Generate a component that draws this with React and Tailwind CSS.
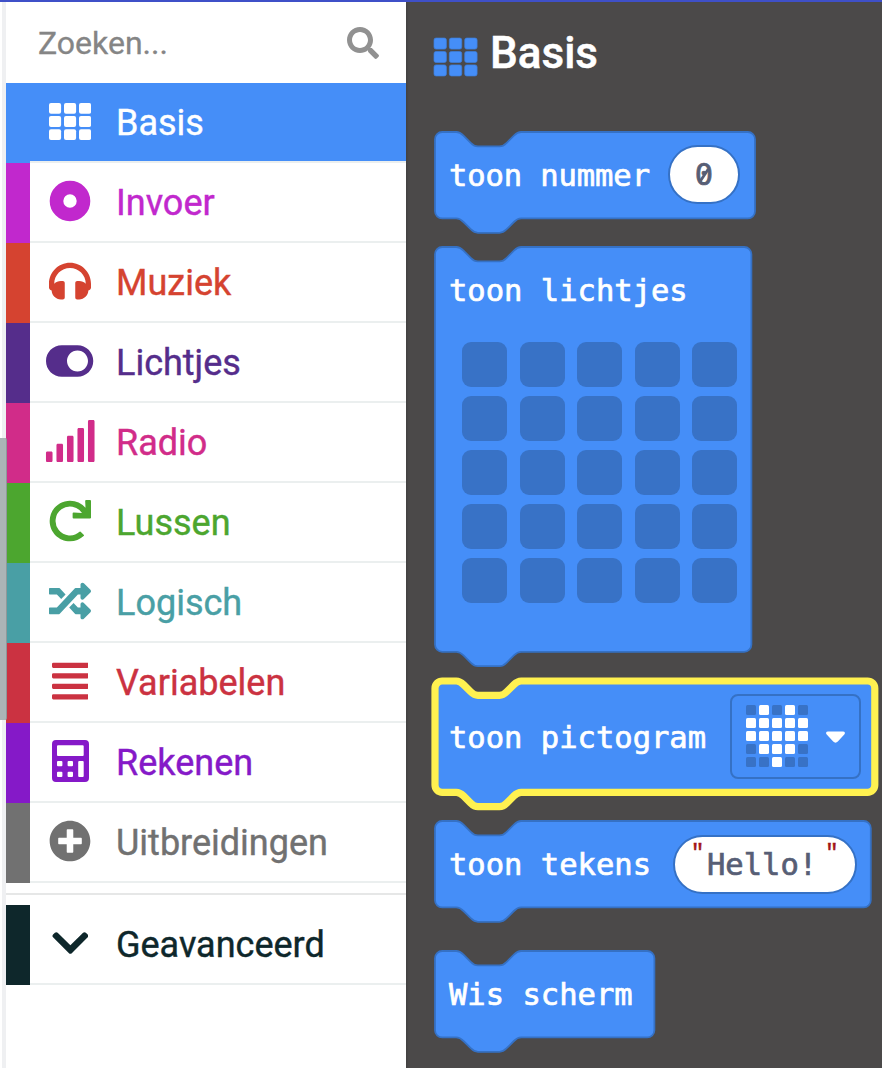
import React from "react";
import {
  FaSearch,
  FaHeadphones,
  FaToggleOn,
  FaSignal,
  FaRedo,
  FaRandom,
  FaAlignJustify,
  FaPlusCircle,
  FaChevronDown,
} from "react-icons/fa";

function GridIcon({ className, stroke }) {
  const cells = [0, 1, 2].flatMap((r) => [0, 1, 2].map((c) => [c, r]));
  return (
    <svg viewBox="0 0 42 37" className={className} fill="currentColor">
      {cells.map(([c, r]) => (
        <rect key={`${c}-${r}`} x={c * 15} y={r * 13.1} width="12.1" height="10.8" rx="2" stroke={stroke} strokeWidth={stroke ? 0.7 : 0} />
      ))}
    </svg>
  );
}

function RingIcon() {
  return (
    <svg viewBox="0 0 42 42" className="w-[42px] h-[42px]">
      <circle cx="21" cy="21" r="13.5" fill="none" stroke="currentColor" strokeWidth="13.6" />
    </svg>
  );
}

function CalculatorIcon() {
  return (
    <svg viewBox="0 0 37 42" className="w-[37px] h-[42px]">
      <path
        fill="currentColor"
        fillRule="evenodd"
        d="M4 0h29a4 4 0 0 1 4 4v34a4 4 0 0 1-4 4H4a4 4 0 0 1-4-4V4a4 4 0 0 1 4-4zM6 5.300a1 1 0 0 0-1 1V15a1 1 0 0 0 1 1h24.700a1 1 0 0 0 1-1V6.300a1 1 0 0 0-1-1zM6 21a1 1 0 0 0-1 1v3.300a1 1 0 0 0 1 1h3.400a1 1 0 0 0 1-1V22a1 1 0 0 0-1-1zM16.600 21a1 1 0 0 0-1 1v3.300a1 1 0 0 0 1 1H20a1 1 0 0 0 1-1V22a1 1 0 0 0-1-1zM6 31.700a1 1 0 0 0-1 1V36a1 1 0 0 0 1 1h3.400a1 1 0 0 0 1-1v-3.300a1 1 0 0 0-1-1zM16.600 31.700a1 1 0 0 0-1 1V36a1 1 0 0 0 1 1H20a1 1 0 0 0 1-1v-3.300a1 1 0 0 0-1-1zM27.200 21a1 1 0 0 0-1 1v14a1 1 0 0 0 1 1h3.500a1 1 0 0 0 1-1V22a1 1 0 0 0-1-1z"
      />
    </svg>
  );
}

const categories = [
  { name: "Invoer", bar: "bg-[#c128cd]", text: "text-[#c128cd]", icon: <RingIcon /> },
  { name: "Muziek", bar: "bg-[#d54330]", text: "text-[#d54330]", icon: <FaHeadphones className="size-[42px]" /> },
  { name: "Lichtjes", bar: "bg-[#552d8b]", text: "text-[#552d8b]", icon: <FaToggleOn className="w-[47.250px] h-[42px]" /> },
  { name: "Radio", bar: "bg-[#d12c89]", text: "text-[#d12c89]", icon: <FaSignal className="w-[52.500px] h-[42px]" /> },
  { name: "Lussen", bar: "bg-[#4ca62f]", text: "text-[#4ca62f]", icon: <FaRedo className="size-[42px]" /> },
  { name: "Logisch", bar: "bg-[#499fa5]", text: "text-[#499fa5]", icon: <FaRandom className="size-[42px]" /> },
  { name: "Variabelen", bar: "bg-[#cb3241]", text: "text-[#cb3241]", icon: <FaAlignJustify className="w-[36.750px] h-[42px]" /> },
  { name: "Rekenen", bar: "bg-[#8519c8]", text: "text-[#8519c8]", icon: <CalculatorIcon /> },
  { name: "Uitbreidingen", bar: "bg-[#717171]", text: "text-[#717171]", icon: <FaPlusCircle className="size-[42px]" /> },
];

function CategoryRow({ name, bar, text, icon, selected }) {
  return (
    <div className={`flex h-20 shrink-0 ${text}`}>
      <div className={`w-6 shrink-0 ${bar}`} />
      <div className={`flex flex-1 items-center border-b-2 border-[#ebefef] ${selected ? bar : ""}`}>
        <div className="flex w-20 shrink-0 justify-center pb-[2px]">{icon}</div>
        <span className="ml-[6px] pt-px text-[36px] leading-none whitespace-nowrap [-webkit-text-stroke:0.4px_currentColor]">{name}</span>
      </div>
    </div>
  );
}

const NOTCH = "c3.6 0 5.4 1.8 7.2 3.6l7.200 7.200c1.800 1.800 3.600 3.600 7.200 3.600h21.600c3.600 0 5.400-1.800 7.200-3.600l7.200-7.200c1.800-1.800 3.600-3.600 7.200-3.600";
const TAB = "c-3.6 0-5.4 1.8-7.2 3.6l-7.200 7.200c-1.800 1.800-3.600 3.600-7.200 3.600h-21.600c-3.600 0-5.400-1.800-7.200-3.600l-7.200-7.200c-1.800-1.800-3.600-3.600-7.200-3.600";

// Statement block: the outline has a notch on top and a matching tab below.
function Block({ w, h, highlighted, className, children }) {
  const d = `M0 7.2a7.2 7.2 0 0 1 7.2-7.2H21.300${NOTCH}H${w - 7.2}a7.2 7.2 0 0 1 7.2 7.2V${h - 7.2}a7.2 7.2 0 0 1-7.2 7.2H86.100${TAB}H7.2a7.2 7.2 0 0 1-7.2-7.2z`;
  return (
    <div className={`relative shrink-0 ${className}`}>
      <svg className="absolute inset-0 size-full overflow-visible">
        <path d={d} fill="#458ef8" stroke={highlighted ? "#fff150" : "#3571c5"} strokeWidth={highlighted ? 7.2 : 1.8} />
      </svg>
      <div className="relative flex size-full text-white">{children}</div>
    </div>
  );
}

function Label({ children, className = "" }) {
  return (
    <span
      className={`font-['DejaVu_Sans_Mono',monospace] text-[30.500px] leading-[36px] whitespace-pre [-webkit-text-stroke:0.7px_currentColor] ${className}`}
    >
      {children}
    </span>
  );
}

const heart = ["01010", "11111", "11111", "01110", "00100"];

export default function App() {
  return (
    <div className="flex h-[1068px] w-[882px] flex-col overflow-hidden bg-white font-[Roboto,sans-serif]">
      <div className="h-[2px] shrink-0 bg-[#3f50c8]" />
      <div className="relative flex min-h-0 flex-1">
        <div className="w-1.5 shrink-0 border-l-2 border-white bg-[#eff0f2]" />
        <div className="absolute top-[436px] left-0 h-[282px] w-[7px] rounded-r-[2px] border-r border-[#8e9899] bg-[#abb4b6]" />

        <aside className="flex w-[400px] shrink-0 flex-col bg-white">
          <div className="flex h-[81px] shrink-0 items-center justify-between pr-[27px] pl-8 text-[#8b8b8b]">
            <span className="text-[32px] leading-none text-[#858585] [-webkit-text-stroke:0.3px_currentColor]">Zoeken...</span>
            <FaSearch className="size-8 text-[#919191]" />
          </div>
          <CategoryRow
            name="Basis"
            bar="bg-[#458ef8]"
            text="text-white"
            selected
            icon={<GridIcon className="h-[37px] w-[42px]" />}
          />
          {categories.map((c) => (
            <CategoryRow key={c.name} {...c} />
          ))}
          <div className="mt-2.5 mb-2.5 h-[2px] shrink-0 bg-[#e6e7e7]" />
          <CategoryRow
            name="Geavanceerd"
            bar="bg-[#0e272b]"
            text="text-[#0e272b]"
            icon={<FaChevronDown className="w-[36.750px] h-[42px]" />}
          />
        </aside>

        <section className="flex flex-1 flex-col bg-[#4b4949] bg-[linear-gradient(to_right,rgba(0,0,0,0.12),transparent_3px)] pl-[29px]">
          <header className="flex h-[129.600px] shrink-0 items-start text-white">
            <GridIcon className="-ml-px mt-[35.500px] h-[38px] w-[43px] overflow-visible text-[#458ef8]" stroke="#3d7fdd" />
            <h1 className="ml-[13px] mt-[29px] text-[44px] leading-[44px] font-medium [-webkit-text-stroke:0.5px_currentColor]">Basis</h1>
          </header>

          <Block w={320} h={86.4} className="h-[86.400px] w-[320px]">
            <Label className="ml-3.5 mt-[26px] tracking-[-0.1px]">toon nummer</Label>
            <div className="ml-[18px] mt-[13.700px] flex h-[58.400px] w-[72px] items-start justify-center rounded-full border-2 border-[#3571c5] bg-white text-[#575e75]">
              <div className="relative mt-[10px] flex">
                <Label>0</Label>
                <svg viewBox="0 0 18 36" className="absolute inset-0 h-9 w-[18px]">
                  <path d="M5.200 24.300L13.200 12.200" stroke="currentColor" strokeWidth="2.800" />
                </svg>
              </div>
            </div>
          </Block>

          <Block w={316.4} h={404.8} className="mt-[28.600px] h-[404.800px] w-[316.400px]">
            <div className="flex flex-col">
              <Label className="ml-3.5 mt-[26.500px]">toon lichtjes</Label>
              <div className="mt-[33px] ml-[27px] grid grid-cols-5 gap-x-[12.600px] gap-y-[9px]">
                {Array.from({ length: 25 }, (_, i) => (
                  <div key={i} className="size-[45px] rounded-[9px] bg-[#3872c6]" />
                ))}
              </div>
            </div>
          </Block>

          <Block w={439.8} h={111.3} highlighted className="mt-[29.300px] h-[111.300px] w-[439.800px]">
            <Label className="ml-3.5 mt-[39px]">toon pictogram</Label>
            <div className="ml-[23.700px] mt-[13.600px] flex h-[84.400px] w-[131px] items-start rounded-[8px] border-2 border-[#3571c5]">
              <div className="mt-[8.700px] ml-[14.300px] grid grid-cols-5 gap-[3px]">
                {heart.flatMap((row, r) =>
                  [...row].map((v, c) => (
                    <div key={`${r}-${c}`} className={`size-[10px] rounded-[1.500px] ${v === "1" ? "bg-white" : "bg-[#3872c6]"}`} />
                  ))
                )}
              </div>
              <svg viewBox="0 0 19 12" className="mt-[34.500px] ml-[17.500px] h-3 w-[19px] overflow-visible">
                <path d="M2 0.500h15c2 0 2.500 1.800 1.300 3l-6.500 7c-1.400 1.500-3.200 1.500-4.600 0l-6.500-7C-.5 2.300 0 .5 2 .5z" fill="#fff" />
              </svg>
            </div>
          </Block>

          <Block w={435.8} h={86.4} className="mt-[28.900px] h-[86.400px] w-[435.800px]">
            <Label className="ml-3.5 mt-[26.500px]">toon tekens</Label>
            <div className="ml-[22px] mt-[13.800px] flex h-[59px] w-[184px] items-start rounded-full border-2 border-[#3571c5] bg-white text-[#575e75]">
              <span className="mt-[5px] ml-[16px] w-[16px] font-['Liberation_Mono',monospace] text-[22px] leading-[24px] text-[#a31515] [-webkit-text-stroke:0.5px_currentColor]">"</span>
              <Label className="mt-[10.500px]">Hello!</Label>
              <span className="mt-[5px] ml-[8px] font-['Liberation_Mono',monospace] text-[22px] leading-[24px] text-[#a31515] [-webkit-text-stroke:0.5px_currentColor]">"</span>
            </div>
          </Block>

          <Block w={219.4} h={86.4} className="mt-[43.500px] h-[86.400px] w-[219.400px]">
            <Label className="ml-3.5 mt-[26.500px]">Wis scherm</Label>
          </Block>
        </section>
      </div>
    </div>
  );
}
